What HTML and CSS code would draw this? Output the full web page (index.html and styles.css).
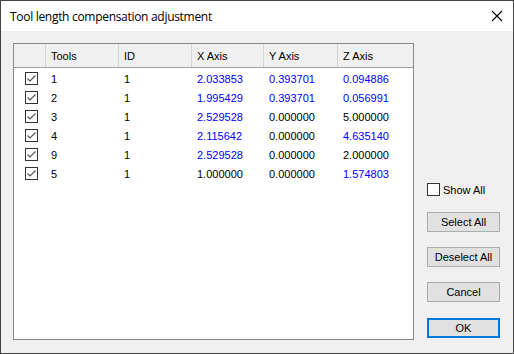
FILE: index.html
```html
<!DOCTYPE html>
<html>
<head>
	<meta charset="utf-8">
	<title>Tool length compensation adjustment</title>
	<link rel="stylesheet" href="styles.css">
</head>
<body>
<div class="dialog">
	<div class="titlebar">
		<span class="title">Tool length compensation adjustment</span>
		<svg class="close" width="12" height="12" viewBox="0 0 12 12"><path d="M1 1 L11 11 M11 1 L1 11" stroke="#000" stroke-width="1.1" fill="none"/></svg>
	</div>
	<div class="content">
		<div class="list">
			<div class="row head">
				<div class="cell chk"></div>
				<div class="cell">Tools</div>
				<div class="cell">ID</div>
				<div class="cell">X Axis</div>
				<div class="cell">Y Axis</div>
				<div class="cell">Z Axis</div>
			</div>
			<div class="row">
				<div class="cell chk"><span class="box"><svg width="11" height="11" viewBox="0 0 11 11"><path d="M1.5 5.5 L4 8 L9.5 2.5" stroke="#555" stroke-width="1.2" fill="none"/></svg></span></div>
				<div class="cell">1</div><div class="cell">1</div>
				<div class="cell blue">2.033853</div><div class="cell blue">0.393701</div><div class="cell blue">0.094886</div>
			</div>
			<div class="row">
				<div class="cell chk"><span class="box"><svg width="11" height="11" viewBox="0 0 11 11"><path d="M1.5 5.5 L4 8 L9.5 2.5" stroke="#555" stroke-width="1.2" fill="none"/></svg></span></div>
				<div class="cell">2</div><div class="cell">1</div>
				<div class="cell blue">1.995429</div><div class="cell blue">0.393701</div><div class="cell blue">0.056991</div>
			</div>
			<div class="row">
				<div class="cell chk"><span class="box"><svg width="11" height="11" viewBox="0 0 11 11"><path d="M1.5 5.5 L4 8 L9.5 2.5" stroke="#555" stroke-width="1.2" fill="none"/></svg></span></div>
				<div class="cell">3</div><div class="cell">1</div>
				<div class="cell blue">2.529528</div><div class="cell">0.000000</div><div class="cell">5.000000</div>
			</div>
			<div class="row">
				<div class="cell chk"><span class="box"><svg width="11" height="11" viewBox="0 0 11 11"><path d="M1.5 5.5 L4 8 L9.5 2.5" stroke="#555" stroke-width="1.2" fill="none"/></svg></span></div>
				<div class="cell">4</div><div class="cell">1</div>
				<div class="cell blue">2.115642</div><div class="cell">0.000000</div><div class="cell blue">4.635140</div>
			</div>
			<div class="row">
				<div class="cell chk"><span class="box"><svg width="11" height="11" viewBox="0 0 11 11"><path d="M1.5 5.5 L4 8 L9.5 2.5" stroke="#555" stroke-width="1.2" fill="none"/></svg></span></div>
				<div class="cell">9</div><div class="cell">1</div>
				<div class="cell blue">2.529528</div><div class="cell">0.000000</div><div class="cell">2.000000</div>
			</div>
			<div class="row">
				<div class="cell chk"><span class="box"><svg width="11" height="11" viewBox="0 0 11 11"><path d="M1.5 5.5 L4 8 L9.5 2.5" stroke="#555" stroke-width="1.2" fill="none"/></svg></span></div>
				<div class="cell">5</div><div class="cell">1</div>
				<div class="cell">1.000000</div><div class="cell">0.000000</div><div class="cell blue">1.574803</div>
			</div>
		</div>
		<div class="side">
			<label class="showall"><span class="box"></span>Show All</label>
			<button class="btn">Select All</button>
			<button class="btn">Deselect All</button>
			<button class="btn">Cancel</button>
			<button class="btn default">OK</button>
		</div>
	</div>
</div>
</body>
</html>
```

FILE: styles.css
```css
body {margin: 0; font-family: "Liberation Sans", Arial, sans-serif; font-size: 11px; color: #000;}
.dialog {width: 514px; height: 354px; box-sizing: border-box; border: 1px solid #444; background: #f0f0f0; display: flex; flex-direction: column;}
.titlebar {height: 30px; background: #fff; display: flex; align-items: center; justify-content: space-between; padding: 0 10px 0 9px;}
.title {font-family: "Open Sans", "Noto Sans", sans-serif; font-size: 12px; letter-spacing: -0.3px;}
.content {flex: 1; display: flex; padding: 12px 12px 13px 12px;}
.list {width: 401px; box-sizing: border-box; border: 1px solid #828790; background: #fff;}
.row {display: grid; grid-template-columns: 31px 73px 73px 72px 74px 75px; height: 19px; align-items: center;}
.row.head {height: 24px; background: #f0f0f0; border-bottom: 1px solid #a0a0a0; margin-bottom: 1px; box-sizing: border-box;}
.row.head .cell {height: 100%; display: flex; align-items: center; border-left: 1px solid #d5d5d5; padding-left: 5px;}
.row.head .cell.chk {border-left: none;}
.cell {padding-left: 6px; white-space: nowrap; box-sizing: border-box;}
.cell.chk {padding-left: 11px; display: flex;}
.blue {color: #0000ff;}
.box {width: 13px; height: 13px; box-sizing: border-box; border: 1px solid #333; background: #fff; display: inline-flex; align-items: center; justify-content: center;}
.side {flex: 1; display: flex; flex-direction: column; align-items: flex-start; justify-content: flex-end; padding-left: 13px; padding-bottom: 2px;}
.showall {display: flex; align-items: center; gap: 3px; height: 13px; margin-bottom: 16px;}
.btn {width: 73px; height: 20px; box-sizing: border-box; border: 1px solid #adadad; background: #e1e1e1; font-family: "Liberation Sans", Arial, sans-serif; font-size: 11px; color: #000; padding: 0; margin-top: 15px;}
.showall + .btn {margin-top: 0;}
.btn.default {border: 2px solid #0078d7; margin-top: 16px;}
```
